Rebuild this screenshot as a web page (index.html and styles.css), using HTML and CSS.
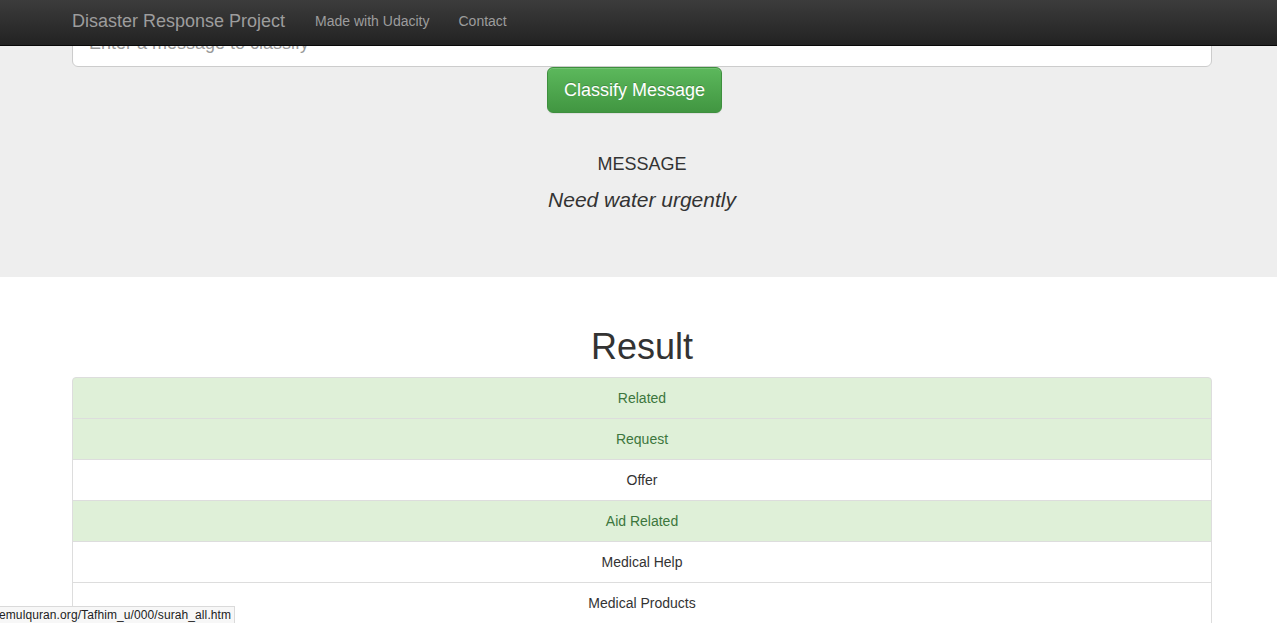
FILE: index.html
```html
<!DOCTYPE html>
<html lang="en">
<head>
<meta charset="utf-8">
<title>Disaster Response Project</title>
<link rel="stylesheet" href="styles.css">
</head>
<body>
<nav class="navbar">
  <div class="container nav-inner">
    <a class="brand" href="#">Disaster Response Project</a>
    <ul class="nav-links">
      <li><a href="#">Made with Udacity</a></li>
      <li><a href="#">Contact</a></li>
    </ul>
  </div>
</nav>

<div class="jumbotron">
  <div class="container">
    <form class="classify-form">
      <input class="msg-input" type="text" placeholder="Enter a message to classify">
      <div class="btn-row">
        <button type="button" class="btn-classify">Classify Message</button>
      </div>
    </form>
    <h4 class="msg-label">MESSAGE</h4>
    <p class="msg-text">Need water urgently</p>
  </div>
</div>

<div class="container">
  <h1 class="result-title">Result</h1>
  <ul class="list-group">
    <li class="item success">Related</li>
    <li class="item success">Request</li>
    <li class="item">Offer</li>
    <li class="item success">Aid Related</li>
    <li class="item">Medical Help</li>
    <li class="item">Medical Products</li>
    <li class="item">Search And Rescue</li>
    <li class="item">Security</li>
    <li class="item">Military</li>
  </ul>
</div>

<div class="statusbar">emulquran.org/Tafhim_u/000/surah_all.htm</div>
</body>
</html>
```

FILE: styles.css
```css
* { box-sizing: border-box; }

html, body {
  margin: 0;
  padding: 0;
}

body {
  font-family: "Liberation Sans", Arial, Helvetica, sans-serif;
  font-size: 14px;
  line-height: 20px;
  color: #333;
  background: #fff;
}

.container {
  width: 1140px;
  margin-left: 72px;
}

/* navbar */
.navbar {
  position: fixed;
  top: 0;
  left: 0;
  right: 0;
  z-index: 10;
  height: 46px;
  background: linear-gradient(to bottom, #3c3c3c 0%, #222 100%);
  border-bottom: 1px solid #080808;
}

.nav-inner {
  display: flex;
  align-items: flex-start;
}

.brand {
  font-size: 18px;
  line-height: 20px;
  padding: 11px 15px 0 0;
  color: #9d9d9d;
  text-decoration: none;
}

.nav-links {
  display: flex;
  list-style: none;
  margin: 0;
  padding: 0;
}

.nav-links a {
  display: block;
  padding: 11px 15px 0 15px;
  font-size: 14px;
  line-height: 20px;
  color: #9d9d9d;
  text-decoration: none;
}

.nav-links li + li a {
  padding-left: 14px;
}

/* jumbotron */
.jumbotron {
  background: #eee;
  padding: 20px 0 65px 0;
  margin-bottom: 50px;
}

.classify-form {
  margin: 0;
}

.msg-input {
  display: block;
  width: 100%;
  height: 47px;
  padding: 10px 16px;
  font-family: "Liberation Sans", Arial, sans-serif;
  font-size: 18px;
  line-height: 24px;
  color: #555;
  background: #fff;
  border: 1px solid #ccc;
  border-radius: 6px;
  box-shadow: inset 0 1px 1px rgba(0,0,0,.075);
  outline: none;
}

.msg-input::placeholder {
  color: #999;
}

.btn-row {
  margin-top: 0;
  padding-left: 475px;
}

.btn-classify {
  display: block;
  width: 175px;
  height: 46px;
  padding: 10px 0;
  white-space: nowrap;
  text-align: center;
  font-family: "Liberation Sans", Arial, sans-serif;
  font-size: 18px;
  line-height: 24px;
  color: #fff;
  text-shadow: 0 -1px 0 rgba(0,0,0,.2);
  background: linear-gradient(to bottom, #5cb85c 0%, #419641 100%);
  border: 1px solid #3e8f3e;
  border-radius: 6px;
  box-shadow: inset 0 1px 0 rgba(255,255,255,.15), 0 1px 1px rgba(0,0,0,.075);
  cursor: pointer;
}

.msg-label {
  margin: 41px 0 0 0;
  text-align: center;
  font-size: 18px;
  font-weight: normal;
  line-height: 20px;
}

.msg-text {
  margin: 14px 0 0 0;
  text-align: center;
  font-size: 21px;
  line-height: 24px;
  font-style: italic;
}

/* result */
.result-title {
  margin: 0 0 10px 0;
  text-align: center;
  font-size: 36px;
  font-weight: normal;
  line-height: 40px;
  color: #333;
}

.list-group {
  list-style: none;
  margin: 0 0 20px 0;
  padding: 0;
}

.item {
  display: block;
  padding: 10px 15px;
  margin-bottom: -1px;
  text-align: center;
  background: #fff;
  border: 1px solid #ddd;
  font-size: 14px;
  line-height: 20px;
  color: #333;
}

.item:first-child {
  border-top-left-radius: 4px;
  border-top-right-radius: 4px;
}

.item.success {
  background: #dff0d8;
  color: #3c763d;
}

/* browser status overlay */
.statusbar {
  position: fixed;
  left: 0;
  bottom: 0;
  width: 235px;
  height: 17px;
  text-indent: -1px;
  overflow: hidden;
  white-space: nowrap;
  font-family: "Liberation Sans", Arial, sans-serif;
  font-size: 12px;
  letter-spacing: 0.1px;
  line-height: 16px;
  color: #222;
  background: #f7f7f7;
  border-top: 1px solid #dadada;
  border-right: 1px solid #dadada;
  z-index: 20;
}
```
